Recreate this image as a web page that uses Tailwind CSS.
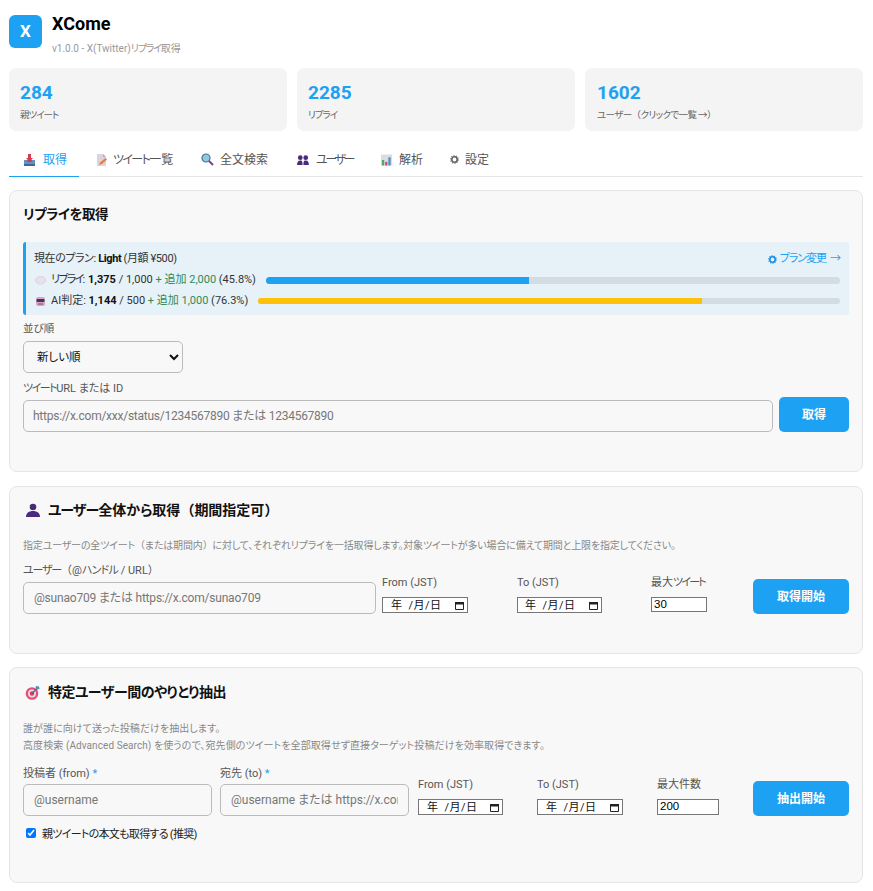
<!DOCTYPE html>
<html lang="ja">
<head>
<meta charset="UTF-8">
<title>XCome</title>
<script src="https://cdn.jsdelivr.net/npm/@tailwindcss/browser@4"></script>
</head>
<body class="bg-white text-[#111] font-['Roboto','Noto_Sans_CJK_JP',sans-serif] [font-feature-settings:'palt']">
<div class="pl-[9px] pr-[10px] pt-[15px]">

  <!-- Header -->
  <header class="flex gap-[10px] h-[53px]">
    <div class="w-[33px] h-[33px] rounded-[6px] bg-[#1da1f2] text-white flex items-center justify-center text-[17px] font-bold leading-none">X</div>
    <div>
      <h1 class="text-[18px] leading-[17px] font-bold text-black">XCome</h1>
      <p class="text-[10px] leading-[12px] text-[#999] mt-[11px]">v1.0.0 - X(Twitter)<span class="tracking-[-1.2px]">リプライ</span>取得</p>
    </div>
  </header>

  <!-- Stats -->
  <div class="grid grid-cols-3 gap-[10px]">
    <div class="h-[63px] rounded-[7px] bg-[#f4f4f4] px-[11px] pt-[14px]">
      <div class="text-[19px] leading-[22px] font-bold text-[#1da1f2]">284</div>
      <div class="text-[9.5px] leading-[12px] text-[#666] mt-[5px] tracking-[-1px]">親ツイート</div>
    </div>
    <div class="h-[63px] rounded-[7px] bg-[#f4f4f4] px-[11px] pt-[14px]">
      <div class="text-[19px] leading-[22px] font-bold text-[#1da1f2]">2285</div>
      <div class="text-[9.5px] leading-[12px] text-[#666] mt-[5px] tracking-[-1px]">リプライ</div>
    </div>
    <div class="h-[63px] rounded-[7px] bg-[#f4f4f4] px-[12px] pt-[14px]">
      <div class="text-[19px] leading-[22px] font-bold text-[#1da1f2]">1602</div>
      <div class="text-[9.5px] leading-[12px] text-[#666] mt-[5px] tracking-[-0.6px]">ユーザー<span class="[font-feature-settings:normal]">（</span>クリックで一覧 →<span class="[font-feature-settings:normal]">）</span></div>
    </div>
  </div>

  <!-- Tabs -->
  <nav class="flex mt-[12px] h-[34px] border-b border-[#e5e5e5] text-[12px] text-[#555]">
    <a class="flex items-center gap-[8px] w-[70px] pl-[15px] h-[34px] border-b border-[#1da1f2] text-[#1da1f2]">
      <svg class="w-[11px] h-[12px] shrink-0" viewBox="0 0 11 12"><path d="M0 6h11v6H0z" fill="#3d6a9a"/><path d="M0 6h3l1 2h3l1-2h3v4H0z" fill="#6a8fb8"/><path d="M4 0h3v4h2L5.500 8 2 4h2z" fill="#d83b50"/></svg>
      <span>取得</span>
    </a>
    <a class="flex items-center gap-[6px] w-[105px] pl-[18px]">
      <svg class="w-[10px] h-[12px] shrink-0" viewBox="0 0 10 12"><path d="M0 0h6l3 3v9H0z" fill="#dcd3df"/><path d="M6 0l3 3H6z" fill="#b9a9bd"/><path d="M2 11l1-2.500L8.500 4 10 5.500 5 10z" fill="#ef7d3c"/></svg>
      <span><span class="tracking-[-1.6px]">ツイート</span>一覧</span>
    </a>
    <a class="flex items-center gap-[6px] w-[96px] pl-[17px]">
      <svg class="w-[13px] h-[13px] shrink-0" viewBox="0 0 13 13"><circle cx="5" cy="5" r="4" fill="#8fc7e8" stroke="#55708a" stroke-width="1.200"/><path d="M8 8l4 4" stroke="#7a3f8f" stroke-width="2"/></svg>
      <span>全文検索</span>
    </a>
    <a class="flex items-center gap-[7px] w-[84px] pl-[17px]">
      <svg class="w-[12px] h-[10px] shrink-0" viewBox="0 0 13 11"><g fill="#4a2a7a"><circle cx="3.500" cy="3" r="2.600"/><circle cx="9.500" cy="3" r="2.600"/><path d="M0 11c0-3 1-5 3.500-5S6 8 6 11zM7 11c0-3 0-5 2.500-5S13 8 13 11z"/></g></svg>
      <span class="tracking-[-2.4px]">ユーザー</span>
    </a>
    <a class="flex items-center gap-[7px] w-[69px] pl-[17px]">
      <svg class="w-[11px] h-[12px] shrink-0" viewBox="0 0 12 12"><path d="M0 0h12v12H0z" fill="#d9dde0"/><path d="M1 6h2.500v6H1z" fill="#5aa469"/><path d="M4.500 8H7v4H4.500z" fill="#e0407b"/><path d="M8 3h2.500v9H8z" fill="#4a90c8"/></svg>
      <span>解析</span>
    </a>
    <a class="flex items-center gap-[6px] pl-[17px]">
      <svg class="w-[9px] h-[9px] shrink-0" viewBox="0 0 10 10"><circle cx="5" cy="5" r="3" fill="none" stroke="#666" stroke-width="1.800"/><circle cx="5" cy="5" r="4.200" fill="none" stroke="#666" stroke-width="1.200" stroke-dasharray="1.300 1.300"/></svg>
      <span>設定</span>
    </a>
  </nav>

  <!-- Reply fetch -->
  <section class="mt-[13px] h-[282px] rounded-[8px] border border-[#e5e5e5] bg-[#f8f8f8] px-[13px] pt-[13px]">
    <h2 class="text-[13.5px] leading-[20px] font-bold text-[#111] tracking-[-0.5px]">リプライを取得</h2>
    <div class="mt-[18px] h-[73px] rounded-[3px] border-l-[3px] border-[#1da1f2] bg-[#e6f1f8] pl-[9px] pr-[9px] pt-[10px] text-[11px] leading-[14px] text-[#333]">
      <div class="flex justify-between">
        <span class="tracking-[-0.4px] -ml-[1px]">現在のプラン: <b class="text-[#111]">Light</b> (月額 ¥500)</span>
        <a class="flex items-center gap-[3px] text-[#1da1f2] tracking-[-1px]">
          <svg class="w-[9px] h-[9px]" viewBox="0 0 10 10"><circle cx="5" cy="5" r="3" fill="none" stroke="#1d8fd8" stroke-width="1.800"/><circle cx="5" cy="5" r="4.200" fill="none" stroke="#1d8fd8" stroke-width="1.200" stroke-dasharray="1.300 1.300"/></svg>
          <span>プラン変更<span class="ml-[4px]">→</span></span>
        </a>
      </div>
      <div class="flex items-center gap-[10px] mt-[7px]">
        <span class="flex items-center gap-[5px] whitespace-nowrap">
          <svg class="w-[11px] h-[9px]" viewBox="0 0 11 9"><ellipse cx="5.500" cy="4.200" rx="5" ry="3.800" fill="#e7e0f0" stroke="#cfc6dc" stroke-width=".6"/></svg>
          <span><span class="tracking-[-1.700px]">リプライ</span>: <b class="text-[#111]">1,375</b> / 1,000 <span class="text-[#2e8b57]">+ 追加 2,000</span> (45.8%)</span>
        </span>
        <div class="flex-1 h-[7px] rounded-full bg-[#d3dce3] overflow-hidden"><div class="h-full bg-[#1da1f2]" style="width:45.8%"></div></div>
      </div>
      <div class="flex items-center gap-[10px] mt-[7px]">
        <span class="flex items-center gap-[5px] whitespace-nowrap">
          <svg class="w-[11px] h-[11px]" viewBox="0 0 11 11"><rect x="1" y="1" width="9" height="9" rx="2" fill="#d9a3c4"/><rect x="1.500" y="3" width="8" height="3" rx="1" fill="#3d3a5c"/><path d="M3 8h5" stroke="#7a4f7a"/></svg>
          <span>AI判定: <b class="text-[#111]">1,144</b> / 500 <span class="text-[#2e8b57]">+ 追加 1,000</span> (76.3%)</span>
        </span>
        <div class="flex-1 h-[6px] rounded-full bg-[#d3dce3] overflow-hidden"><div class="h-full bg-[#ffc107]" style="width:76.3%"></div></div>
      </div>
    </div>
    <label class="block text-[10.5px] leading-[14px] text-[#555] mt-[7px]">並び順</label>
    <select class="block mt-[5px] w-[160px] h-[32px] rounded-[5px] border border-[#bbb] bg-[#f8f8f8] pl-[9px] text-[11.5px] text-[#111]">
      <option>新しい順</option>
    </select>
    <label class="block text-[11px] leading-[14px] text-[#555] mt-[9px]"><span class="tracking-[-1.5px]">ツイート</span>URL または ID</label>
    <div class="flex items-end gap-[6px] mt-[1px]">
      <input type="text" placeholder="https://x.com/xxx/status/1234567890 または 1234567890" class="flex-1 h-[32px] rounded-[5px] border border-[#bbb] px-[9px] text-[12px] tracking-[-0.25px] placeholder:text-[#777]">
      <button class="w-[70px] h-[35px] rounded-[5px] bg-[#1da1f2] text-white text-[12px] font-bold">取得</button>
    </div>
  </section>

  <!-- User-wide fetch -->
  <section class="mt-[14px] h-[168px] rounded-[8px] border border-[#e5e5e5] bg-[#f8f8f8] px-[13px] pt-[13px]">
    <h2 class="flex items-center gap-[8px] text-[14px] leading-[20px] font-bold text-[#111] pl-[3px]">
      <svg class="w-[14px] h-[14px]" viewBox="0 0 14 14"><g fill="#4a2a7a"><circle cx="7" cy="4" r="3.300"/><path d="M0 14c0-4 3-6 7-6s7 2 7 6z"/></g></svg>
      <span><span class="tracking-[-1px]">ユーザー</span>全体から取得<span class="[font-feature-settings:normal]">（</span>期間指定可<span class="[font-feature-settings:normal]">）</span></span>
    </h2>
    <p class="mt-[19px] text-[10px] leading-[14px] text-[#888] tracking-[-0.17px]">指定ユーザーの全ツイート<span class="[font-feature-settings:normal]">（</span>または期間内<span class="[font-feature-settings:normal]">）</span>に対して、それぞれリプライを一括取得します。対象ツイートが多い場合に備えて期間と上限を指定してください。</p>
    <div class="flex items-end mt-[11px]">
      <div class="w-[353px] mr-[6px]">
        <label class="block text-[11px] leading-[14px] text-[#555] mb-[4px]"><span class="tracking-[-1.2px]">ユーザー</span><span class="[font-feature-settings:normal]">（</span>@<span class="tracking-[-0.8px]">ハンドル</span> / URL<span class="[font-feature-settings:normal]">）</span></label>
        <input type="text" placeholder="@sunao709 または https://x.com/sunao709" class="block w-full h-[32px] rounded-[5px] border border-[#bbb] px-[10px] text-[12px] tracking-[-0.2px] placeholder:text-[#777]">
      </div>
      <div class="w-[135px]">
        <label class="block text-[11px] leading-[14px] text-[#555] mb-[7px]">From (JST)</label>
        <div class="flex items-center justify-between w-[86px] h-[16px] border border-[#767676] bg-white pl-[8px] pr-[3px] text-[11px] leading-none text-[#111] mb-[1px]">
          <span class="whitespace-pre tracking-[0.5px]"><span class="mr-[6px]">年</span>/月/日</span>
          <svg class="w-[9px] h-[9px]" viewBox="0 0 9 9"><path d="M.5 1.500h8v7h-8z" fill="none" stroke="#222"/><path d="M0 1h9v2.500H0z" fill="#222"/></svg>
        </div>
      </div>
      <div class="w-[134px]">
        <label class="block text-[11px] leading-[14px] text-[#555] mb-[7px]">To (JST)</label>
        <div class="flex items-center justify-between w-[85px] h-[16px] border border-[#767676] bg-white pl-[7px] pr-[3px] text-[11px] leading-none text-[#111] mb-[1px]">
          <span class="whitespace-pre tracking-[0.5px]"><span class="mr-[6px]">年</span>/月/日</span>
          <svg class="w-[9px] h-[9px]" viewBox="0 0 9 9"><path d="M.5 1.500h8v7h-8z" fill="none" stroke="#222"/><path d="M0 1h9v2.500H0z" fill="#222"/></svg>
        </div>
      </div>
      <div class="w-[102px]">
        <label class="block text-[11px] leading-[14px] text-[#555] mb-[7px]">最大<span class="tracking-[-1.8px]">ツイート</span></label>
        <input type="number" value="30" class="block w-[56px] h-[15px] border border-[#767676] bg-white px-[2px] text-[11.5px] font-['Liberation_Sans',sans-serif] text-black mb-[2px]">
      </div>
      <button class="w-[96px] h-[35px] rounded-[5px] bg-[#1da1f2] text-white text-[12px] font-bold">取得開始</button>
    </div>
  </section>

  <!-- Between users -->
  <section class="mt-[13px] h-[216px] rounded-[8px] border border-[#e5e5e5] bg-[#f8f8f8] px-[13px] pt-[14px]">
    <h2 class="flex items-center gap-[8px] text-[14px] leading-[20px] font-bold text-[#111] pl-[2px]">
      <svg class="w-[15px] h-[15px]" viewBox="0 0 15 15"><circle cx="7" cy="8.500" r="6.300" fill="#e0507a"/><circle cx="7" cy="8.500" r="4" fill="#f3d7e0"/><circle cx="7" cy="8.500" r="2.200" fill="#d83b60"/><path d="M7 8.500L12.500 3" stroke="#4a6a8a" stroke-width="1.200"/><path d="M11 1l3 .5L14.500 4l-2 .5-2-2z" fill="#4a90c8"/></svg>
      <span class="tracking-[-0.5px]">特定ユーザー間のやりとり抽出</span>
    </h2>
    <p class="mt-[18px] text-[10px] leading-[17px] text-[#888] tracking-[0.08px]">誰が誰に向けて送った投稿だけを抽出します。<br>高度検索 (Advanced Search) を使うので、宛先側のツイートを全部取得せず直接ターゲット投稿だけを効率取得できます。</p>
    <div class="flex items-end mt-[13px]">
      <div class="w-[189px] mr-[8px]">
        <label class="block text-[11px] leading-[14px] text-[#555] mb-[3px]">投稿者 (from) <span class="text-[#1da1f2]">*</span></label>
        <input type="text" placeholder="@username" class="block w-full h-[32px] rounded-[5px] border border-[#bbb] px-[10px] text-[12px] placeholder:text-[#777]">
      </div>
      <div class="w-[189px] mr-[9px]">
        <label class="block text-[11px] leading-[14px] text-[#555] mb-[3px]">宛先 (to) <span class="text-[#1da1f2]">*</span></label>
        <input type="text" placeholder="@username または https://x.com/username" class="block w-full h-[32px] rounded-[5px] border border-[#bbb] px-[10px] text-[12px] placeholder:text-[#777]">
      </div>
      <div class="w-[119px]">
        <label class="block text-[11px] leading-[14px] text-[#555] mb-[7px]">From (JST)</label>
        <div class="flex items-center justify-between w-[85px] h-[16px] border border-[#767676] bg-white pl-[8px] pr-[3px] text-[11px] leading-none text-[#111] mb-[1px]">
          <span class="whitespace-pre tracking-[0.5px]"><span class="mr-[6px]">年</span>/月/日</span>
          <svg class="w-[9px] h-[9px]" viewBox="0 0 9 9"><path d="M.5 1.500h8v7h-8z" fill="none" stroke="#222"/><path d="M0 1h9v2.500H0z" fill="#222"/></svg>
        </div>
      </div>
      <div class="w-[120px]">
        <label class="block text-[11px] leading-[14px] text-[#555] mb-[7px]">To (JST)</label>
        <div class="flex items-center justify-between w-[86px] h-[16px] border border-[#767676] bg-white pl-[8px] pr-[3px] text-[11px] leading-none text-[#111] mb-[1px]">
          <span class="whitespace-pre tracking-[0.5px]"><span class="mr-[6px]">年</span>/月/日</span>
          <svg class="w-[9px] h-[9px]" viewBox="0 0 9 9"><path d="M.5 1.500h8v7h-8z" fill="none" stroke="#222"/><path d="M0 1h9v2.500H0z" fill="#222"/></svg>
        </div>
      </div>
      <div class="w-[96px]">
        <label class="block text-[11px] leading-[14px] text-[#555] mb-[7px]">最大件数</label>
        <input type="number" value="200" class="block w-[62px] h-[16px] border border-[#767676] bg-white px-[2px] text-[11.5px] font-['Liberation_Sans',sans-serif] text-black mb-[1px]">
      </div>
      <button class="w-[96px] h-[35px] rounded-[5px] bg-[#1da1f2] text-white text-[12px] font-bold">抽出開始</button>
    </div>
    <label class="flex items-center gap-[6px] mt-[12px] pl-[3px] text-[11px] leading-[14px] text-[#222] tracking-[-0.7px]">
      <input type="checkbox" checked class="w-[10px] h-[10px] mb-[4px] accent-[#0075ff]">
      親ツイートの本文も取得する (推奨)
    </label>
  </section>
</div>
</body>
</html>
